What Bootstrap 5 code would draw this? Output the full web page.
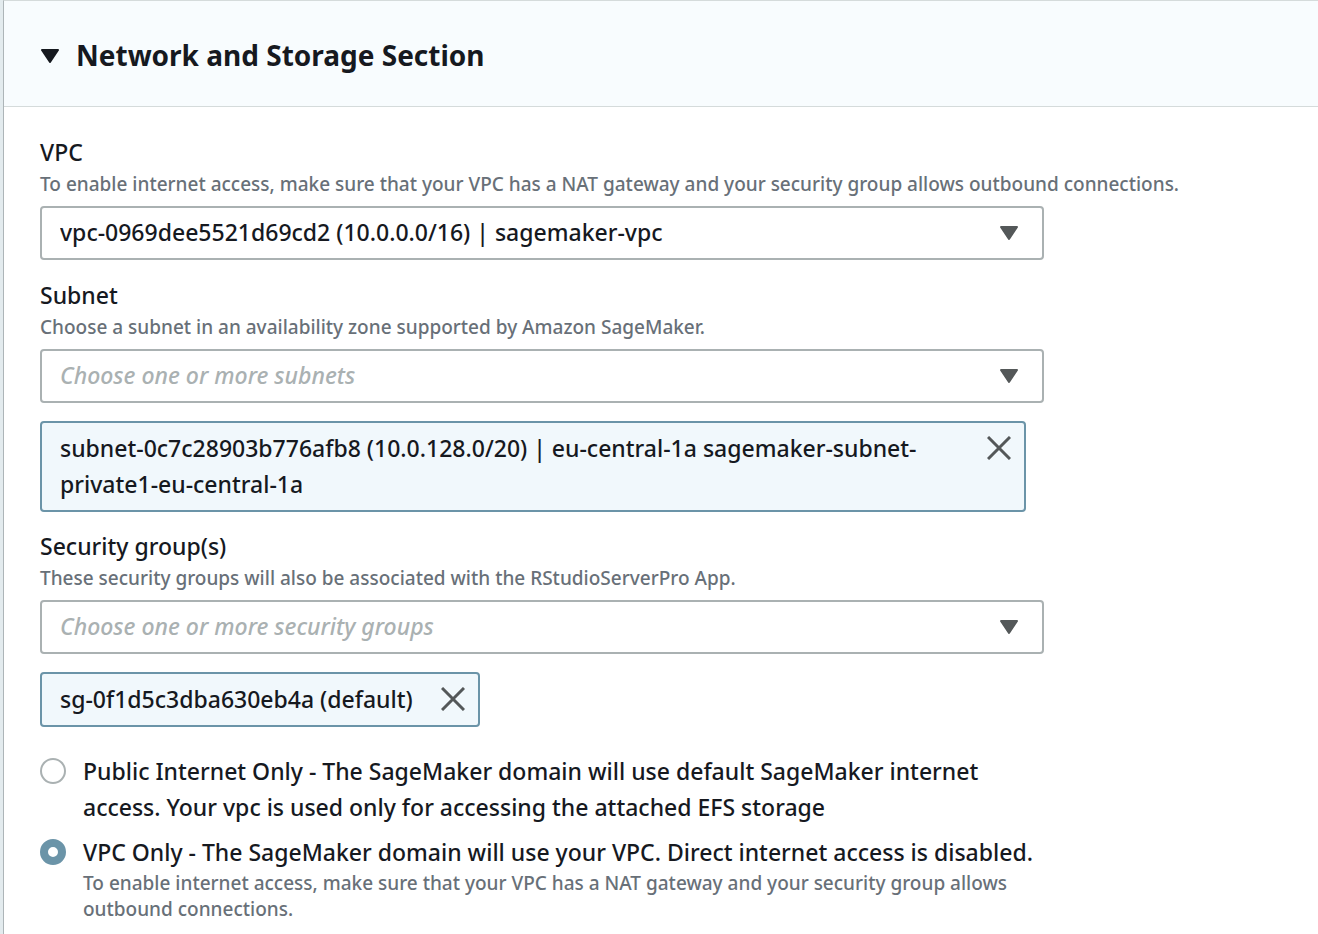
<!DOCTYPE html>
<html lang="en">
<head>
<meta charset="utf-8">
<meta name="viewport" content="width=device-width, initial-scale=1">
<title>Network and Storage Section</title>
<link href="https://cdn.jsdelivr.net/npm/bootstrap@5.3.0/dist/css/bootstrap.min.css" rel="stylesheet">
<style>
  body { background: #e3ebee; color: #16191f; font: 500 23px/36px "Noto Sans", "Open Sans", sans-serif; }
  .panel { margin-left: 3px; border-left: 1px solid #adb5b8; border-top: 1px solid #d5dbdb; background: #fff; }
  .panel-head { background: #f8fcfe; border-bottom: 1px solid #d5dbdb; padding: 32px 36px 29px; }
  .section-toggle { font-size: 28px; line-height: 44px; font-weight: 700; gap: 16px; color: #16191f; }
  .panel-main { padding: 28px 36px; }
  .field { margin-bottom: 18px; }
  .field-chips { margin-bottom: 17px; }
  .field-name { line-height: 34px; margin-bottom: 2px; }
  .field-help { font-size: 19px; line-height: 26px; color: #687078; }
  .field-box { max-width: 1004px; }
  .picker { margin-top: 9px; height: 54px; padding: 0 60px 2px 18px; font-size: 23px; font-weight: 500; line-height: 36px; color: #16191f;
    border: 2px solid #aab1b2; border-radius: 4px; background-color: #fff; background-position: right 23px center; background-size: 20px 16px;
    background-image: url("data:image/svg+xml,%3Csvg xmlns='http://www.w3.org/2000/svg' viewBox='0 0 20 16'%3E%3Cpath d='M2 2H18L10 14Z' fill='%23545859' stroke='%23545859' stroke-width='2' stroke-linejoin='round'/%3E%3C/svg%3E"); }
  .picker-empty { font-style: italic; color: #aab1b2; }
  .chip { margin-top: 18px; padding: 7px 13px 8px 18px; gap: 28px; border: 2px solid #6b94a8; border-radius: 4px; background: #f1f8fc; width: fit-content; max-width: 986px; }
  .chip svg { display: block; }
  .chip-close { height: 36px; }
  .choices { padding-top: 9px; }
  .choice { gap: 17px; max-width: 1004px; margin-bottom: 9px; }
  .choice .form-check-input { width: 26px; height: 26px; margin: 5px 0 0; border: 2px solid #aab1b2; }
  .choice .form-check-input:checked { border: 8px solid #6b94a8; background: #fff; }
</style>
<script src="https://cdn.jsdelivr.net/npm/bootstrap@5.3.0/dist/js/bootstrap.bundle.min.js"></script>
</head>
<body>
<section class="panel">
  <header class="panel-head">
    <h2 class="m-0 d-flex">
      <button type="button" class="section-toggle btn border-0 p-0 d-flex align-items-center" data-bs-toggle="collapse" data-bs-target="#network" aria-expanded="true" aria-controls="network">
        <svg width="20" height="16" viewBox="0 0 20 16" aria-hidden="true"><path d="M2 3H18L10 15Z" fill="#16191f" stroke="#16191f" stroke-width="2" stroke-linejoin="round"/></svg>
        <span>Network and Storage Section</span>
      </button>
    </h2>
  </header>
  <form id="network" class="panel-main collapse show">
    <div class="field">
      <label for="vpc" class="field-name d-block">VPC</label>
      <div class="field-help">To enable internet access, make sure that your VPC has a NAT gateway and your security group allows outbound connections.</div>
      <select id="vpc" class="form-select picker field-box">
        <option>vpc-0969dee5521d69cd2 (10.0.0.0/16) | sagemaker-vpc</option>
      </select>
    </div>
    <div class="field field-chips">
      <label for="subnet" class="field-name d-block">Subnet</label>
      <div class="field-help">Choose a subnet in an availability zone supported by Amazon SageMaker.</div>
      <select id="subnet" class="form-select picker picker-empty field-box">
        <option>Choose one or more subnets</option>
      </select>
      <div class="chip d-flex align-items-start justify-content-between">
        <span>subnet-0c7c28903b776afb8 (10.0.128.0/20) | eu-central-1a sagemaker-subnet-private1-eu-central-1a</span>
        <button type="button" class="chip-close btn border-0 p-0" aria-label="Remove subnet">
          <svg width="24" height="24" viewBox="0 0 24 24" aria-hidden="true"><path d="M1 1L23 23M23 1L1 23" stroke="#545859" stroke-width="3"/></svg>
        </button>
      </div>
    </div>
    <div class="field field-chips">
      <label for="groups" class="field-name d-block">Security group(s)</label>
      <div class="field-help">These security groups will also be associated with the RStudioServerPro App.</div>
      <select id="groups" class="form-select picker picker-empty field-box">
        <option>Choose one or more security groups</option>
      </select>
      <div class="chip d-flex align-items-start">
        <span>sg-0f1d5c3dba630eb4a (default)</span>
        <button type="button" class="chip-close btn border-0 p-0" aria-label="Remove security group">
          <svg width="24" height="24" viewBox="0 0 24 24" aria-hidden="true"><path d="M1 1L23 23M23 1L1 23" stroke="#545859" stroke-width="3"/></svg>
        </button>
      </div>
    </div>
    <div class="choices">
      <div class="choice d-flex">
        <input class="form-check-input flex-shrink-0" type="radio" name="access" id="public">
        <label for="public">Public Internet Only - The SageMaker domain will use default SageMaker internet access. Your vpc is used only for accessing the attached EFS storage</label>
      </div>
      <div class="choice d-flex">
        <input class="form-check-input flex-shrink-0" type="radio" name="access" id="private" aria-describedby="private-help" checked>
        <div>
          <label for="private" class="d-block">VPC Only - The SageMaker domain will use your VPC. Direct internet access is disabled.</label>
          <div id="private-help" class="field-help">To enable internet access, make sure that your VPC has a NAT gateway and your security group allows outbound connections.</div>
        </div>
      </div>
    </div>
  </form>
</section>
</body>
</html>
